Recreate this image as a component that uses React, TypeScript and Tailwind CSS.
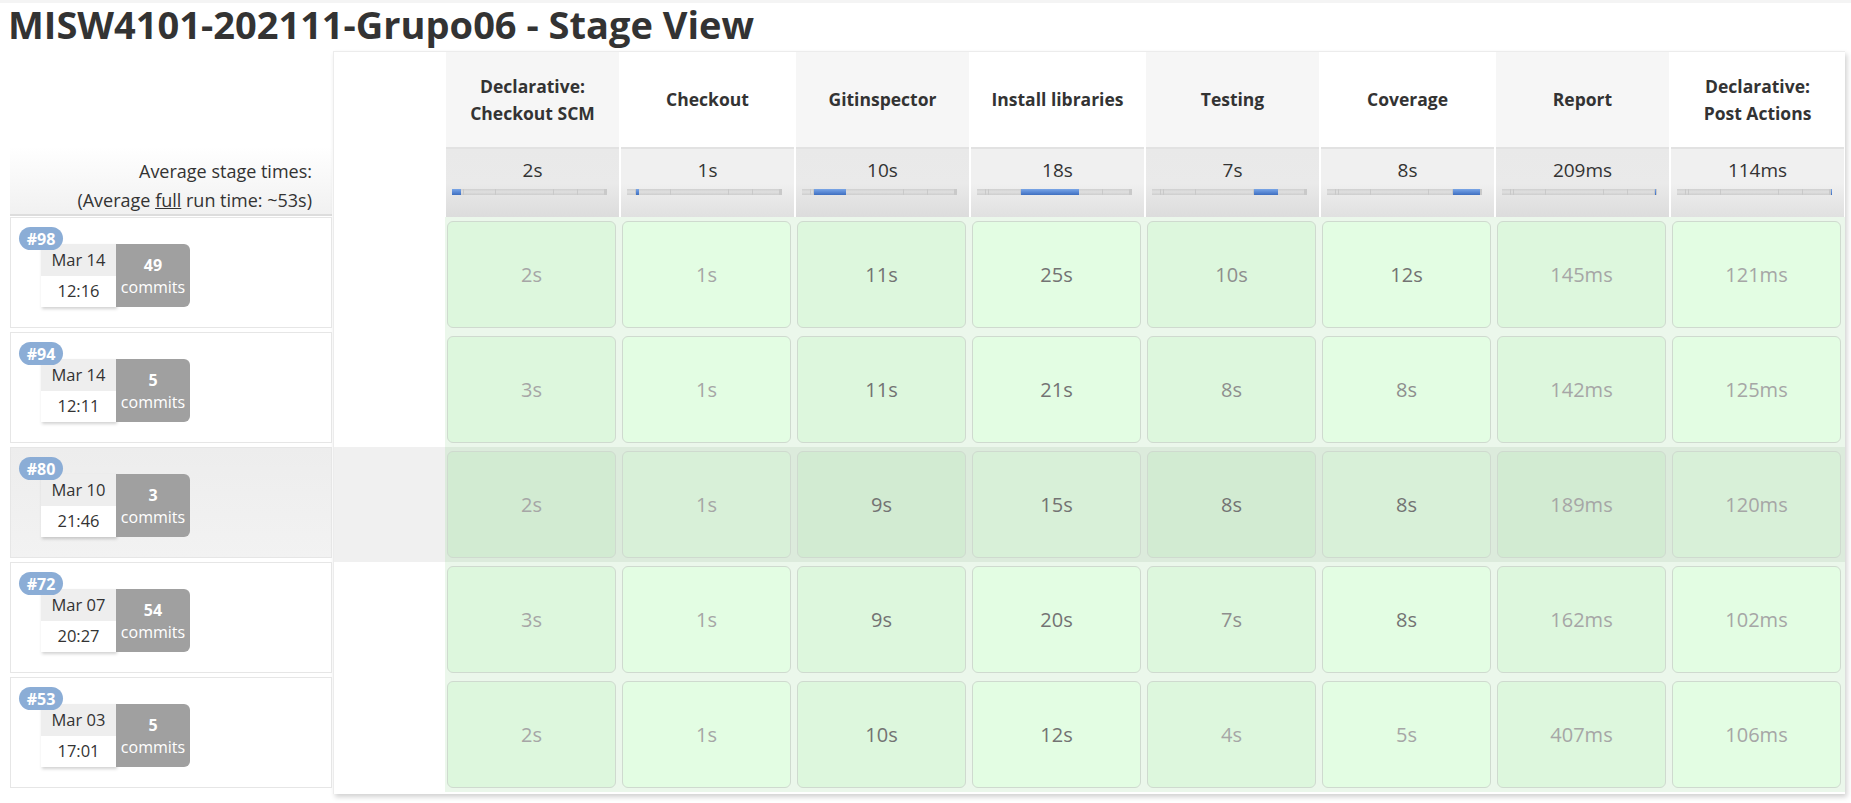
import React from 'react';

const font = { fontFamily: '"Open Sans", "Noto Sans", Arial, sans-serif' };

interface Stage {
  name: string[];
  avg: string;
}

const stages: Stage[] = [
  { name: ['Declarative:', 'Checkout SCM'], avg: '2s' },
  { name: ['Checkout'], avg: '1s' },
  { name: ['Gitinspector'], avg: '10s' },
  { name: ['Install libraries'], avg: '18s' },
  { name: ['Testing'], avg: '7s' },
  { name: ['Coverage'], avg: '8s' },
  { name: ['Report'], avg: '209ms' },
  { name: ['Declarative:', 'Post Actions'], avg: '114ms' },
];

// segment boundaries (px) inside the 155px progress bar
const bounds = [0, 9, 12, 44, 102, 126, 153, 154, 155];

type Tone = 'l' | 'm' | 'd';

interface Run {
  id: string;
  date: string;
  time: string;
  commits: string;
  cells: [string, Tone][];
}

const runs: Run[] = [
  {
    id: '#98', date: 'Mar 14', time: '12:16', commits: '49',
    cells: [['2s', 'l'], ['1s', 'l'], ['11s', 'd'], ['25s', 'd'], ['10s', 'm'], ['12s', 'd'], ['145ms', 'l'], ['121ms', 'l']],
  },
  {
    id: '#94', date: 'Mar 14', time: '12:11', commits: '5',
    cells: [['3s', 'l'], ['1s', 'l'], ['11s', 'd'], ['21s', 'd'], ['8s', 'm'], ['8s', 'm'], ['142ms', 'l'], ['125ms', 'l']],
  },
  {
    id: '#80', date: 'Mar 10', time: '21:46', commits: '3',
    cells: [['2s', 'l'], ['1s', 'l'], ['9s', 'd'], ['15s', 'd'], ['8s', 'd'], ['8s', 'd'], ['189ms', 'l'], ['120ms', 'l']],
  },
  {
    id: '#72', date: 'Mar 07', time: '20:27', commits: '54',
    cells: [['3s', 'l'], ['1s', 'l'], ['9s', 'd'], ['20s', 'd'], ['7s', 'm'], ['8s', 'd'], ['162ms', 'l'], ['102ms', 'l']],
  },
  {
    id: '#53', date: 'Mar 03', time: '17:01', commits: '5',
    cells: [['2s', 'l'], ['1s', 'l'], ['10s', 'd'], ['12s', 'd'], ['4s', 'l'], ['5s', 'l'], ['407ms', 'l'], ['106ms', 'l']],
  },
];

const toneClass: Record<Tone, string> = {
  l: 'text-[#a6a6a6]',
  m: 'text-[#8e8e8e]',
  d: 'text-[#737373]',
};

const ProgressBar: React.FC<{ active: number }> = ({ active }) => (
  <div className="relative ml-[6px] mt-[6px] h-[6px] w-[155px]">
    {bounds.slice(0, -1).map((start, i) => {
      const width = Math.max(1, bounds[i + 1] - start);
      return (
        <div
          key={i}
          className={
            i === active
              ? 'absolute top-0 h-[6px] bg-gradient-to-b from-[#7aa6e6] via-[#5b8ad6] to-[#3f6fbf]'
              : 'absolute top-0 h-[6px] border-r border-[#c9c9c9] bg-gradient-to-b from-[#cfcfcf] via-[#e0e0e0] to-[#cdcdcd]'
          }
          style={{ left: start, width }}
        />
      );
    })}
  </div>
);

const RunRow: React.FC<{ run: Run; highlight: boolean }> = ({ run, highlight }) => (
  <div
    className={`relative mb-[4px] h-[111px] border border-[#e6e6e6] ${
      highlight ? 'bg-gradient-to-b from-[#ededed] to-[#f2f2f2]' : 'bg-white'
    }`}
  >
    <div className="absolute left-[8px] top-[9px] z-10 flex h-[23px] w-[44px] items-center justify-center rounded-full bg-[#8badd6] text-[16px] font-bold text-white">
      {run.id}
    </div>
    <div className="ml-[30px] mt-[26px] flex">
      <div className="flex h-[63px] w-[75px] flex-col bg-white text-[16.5px] text-[#333] shadow-[1px_2px_3px_rgba(0,0,0,0.18)]">
        <div className="flex h-[32px] items-center justify-center bg-[#eeeeee]">{run.date}</div>
        <div className="flex h-[31px] items-center justify-center">{run.time}</div>
      </div>
      <div className="flex h-[63px] w-[74px] flex-col items-center justify-center rounded-r-[6px] bg-[#a0a0a0] text-white">
        <span className="text-[16px] font-bold leading-[22px]">{run.commits}</span>
        <span className="text-[16px] leading-[22px]">commits</span>
      </div>
    </div>
  </div>
);

export default function App() {
  return (
    <div className="min-h-screen bg-white text-[#333]" style={font}>
      <div className="h-[3px] bg-[#f4f4f4]" />
      <h1 className="pl-[8px] text-[38px] font-bold leading-[42px] text-[#333]">
        MISW4101-202111-Grupo06 - Stage View
      </h1>

      <div className="mt-[6px] flex">
        {/* left column: run labels */}
        <div className="ml-[10px] w-[322px]">
          <div className="h-[96px]" />
          <div className="h-[69px] border-b-2 border-[#dddddd] bg-gradient-to-b from-white to-[#f1f1f1] pr-[20px] pt-[10px] text-right text-[18px] leading-[29px] text-[#333]">
            <div>Average stage times:</div>
            <div>
              (Average <span className="underline">full</span> run time: ~53s)
            </div>
          </div>
          <div className="mt-[1px]">
            {runs.map((r, i) => (
              <RunRow key={r.id} run={r} highlight={i === 2} />
            ))}
          </div>
        </div>

        {/* stage panel */}
        <div className="ml-[1px] w-[1512px] border-t border-l border-[#ececec] bg-white pb-[2px] shadow-[2px_3px_5px_rgba(0,0,0,0.18)]">
          <div className="grid grid-cols-[111px_repeat(8,175px)]">
            {/* header names */}
            <div className="h-[95px] bg-white" />
            {stages.map((s, i) => (
              <div key={s.name.join()} className="px-[1px]">
                <div
                  className={`flex h-[95px] flex-col items-center justify-center text-[17.5px] font-bold leading-[27px] text-[#333] ${
                    i % 2 === 0 ? 'bg-[#f6f6f6]' : 'bg-white'
                  }`}
                >
                  {s.name.map((n) => (
                    <span key={n}>{n}</span>
                  ))}
                </div>
              </div>
            ))}

            {/* average times */}
            <div className="h-[70px] bg-white" />
            {stages.map((s, i) => (
              <div key={s.avg + i} className="px-[1px]">
                <div
                  className={`h-[70px] border-t-2 border-[#e2e2e2] pt-[8px] ${
                    i % 2 === 0
                      ? 'bg-gradient-to-b from-[#e9e9e9] via-[#eaeaea] to-[#dcdcdc]'
                      : 'bg-gradient-to-b from-[#f0f0f0] via-[#f0f0f0] to-[#e0e0e0]'
                  }`}
                >
                  <div className="text-center text-[19px] leading-[26px] text-[#333]">{s.avg}</div>
                  <ProgressBar active={i} />
                </div>
              </div>
            ))}

            {/* run rows */}
            {runs.map((r, ri) => {
              const hl = ri === 2;
              return (
                <React.Fragment key={r.id}>
                  <div className={`h-[115px] ${hl ? 'bg-[#f0f0f0]' : 'bg-white'}`} />
                  {r.cells.map(([value, tone], ci) => (
                    <div
                      key={ci}
                      className={`h-[115px] py-[4px] pl-[2px] pr-[4px] ${hl ? 'bg-[#dcebdc]' : 'bg-[#ebf7eb]'}`}
                    >
                      <div
                        className={`flex h-full items-center justify-center rounded-[6px] border border-[#cfdacf] text-[20px] ${toneClass[tone]} ${
                          hl
                            ? ci % 2 === 0
                              ? 'bg-[#d2ebd2]'
                              : 'bg-[#d8f0d8]'
                            : ci % 2 === 0
                              ? 'bg-[#ddf7dd]'
                              : 'bg-[#e3fde3]'
                        }`}
                      >
                        {value}
                      </div>
                    </div>
                  ))}
                </React.Fragment>
              );
            })}
          </div>
        </div>
      </div>
    </div>
  );
}
